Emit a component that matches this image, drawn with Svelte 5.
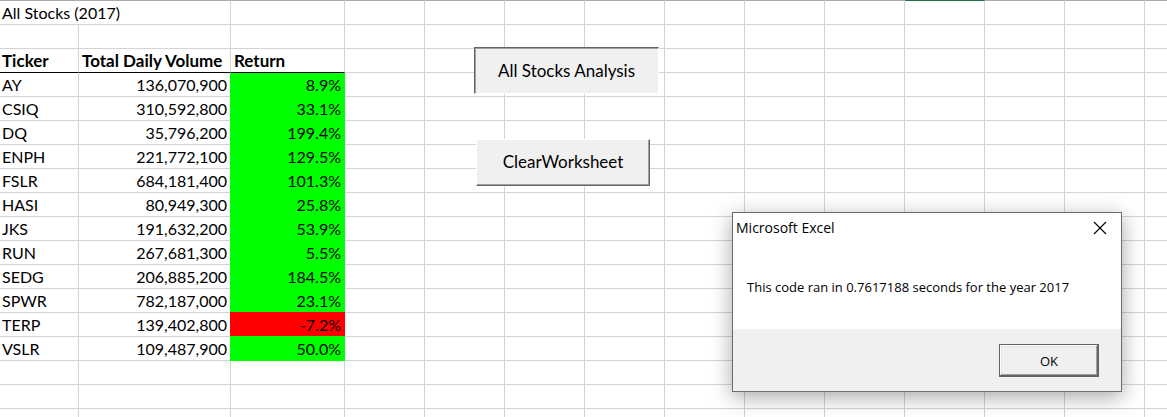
<script>
  const stocks = [
    { ticker: 'AY', volume: 136070900, change: 8.9 },
    { ticker: 'CSIQ', volume: 310592800, change: 33.1 },
    { ticker: 'DQ', volume: 35796200, change: 199.4 },
    { ticker: 'ENPH', volume: 221772100, change: 129.5 },
    { ticker: 'FSLR', volume: 684181400, change: 101.3 },
    { ticker: 'HASI', volume: 80949300, change: 25.8 },
    { ticker: 'JKS', volume: 191632200, change: 53.9 },
    { ticker: 'RUN', volume: 267681300, change: 5.5 },
    { ticker: 'SEDG', volume: 206885200, change: 184.5 },
    { ticker: 'SPWR', volume: 782187000, change: 23.1 },
    { ticker: 'TERP', volume: 139402800, change: -7.2 },
    { ticker: 'VSLR', volume: 109487900, change: 50.0 }
  ];
  // Empty columns to the right of the data; the last one takes the spare width.
  const blanks = Array.from({ length: 11 }, (_, i) => i);
  const selectedColumn = 7;
  const trailingRows = [0, 1, 2];

  let open = $state(true);
</script>

{#snippet blankCells()}
  {#each blanks as b (b)}<td></td>{/each}
{/snippet}

<main class="sheet">
  <table>
    <colgroup>
      <col class="col-ticker" />
      <col class="col-volume" />
      <col class="col-return" />
      {#each blanks as b (b)}
        <col class={b === blanks.length - 1 ? '' : 'col-blank'} />
      {/each}
    </colgroup>
    <thead>
      <tr class="first">
        <td colspan="2">All Stocks (2017)</td>
        <td></td>
        {#each blanks as b (b)}<td class:selected={b === selectedColumn}></td>{/each}
      </tr>
      <tr><td></td><td></td><td></td>{@render blankCells()}</tr>
      <tr>
        <th scope="col">Ticker</th>
        <th scope="col">Total Daily Volume</th>
        <th scope="col">Return</th>
        {@render blankCells()}
      </tr>
    </thead>
    <tbody>
      {#each stocks as stock, i (stock.ticker)}
        <tr>
          <td>{stock.ticker}</td>
          <td class="number">{stock.volume.toLocaleString('en-US')}</td>
          <td class="number fill" class:loss={stock.change < 0} class:top={i === 0}>{stock.change.toFixed(1)}%</td>
          {@render blankCells()}
        </tr>
      {/each}
      {#each trailingRows as r (r)}
        <tr><td></td><td></td><td></td>{@render blankCells()}</tr>
      {/each}
    </tbody>
  </table>

  <button type="button" class="macro pressed" onclick={() => (open = true)}>All Stocks Analysis</button>
  <button type="button" class="macro raised">ClearWorksheet</button>

  {#if open}
    <div class="dialog" role="dialog" aria-labelledby="dialog-title" aria-describedby="dialog-text">
      <header>
        <span id="dialog-title">Microsoft Excel</span>
        <button type="button" class="close" aria-label="Close" onclick={() => (open = false)}>
          <svg width="14" height="14" viewBox="0 0 14 14" aria-hidden="true">
            <path d="M1 1L13 13M13 1L1 13" fill="none" stroke="#000" stroke-width="1.1" />
          </svg>
        </button>
      </header>
      <p id="dialog-text">This code ran in 0.7617188 seconds for the year 2017</p>
      <footer>
        <button type="button" class="ok" onclick={() => (open = false)}>OK</button>
      </footer>
    </div>
  {/if}
</main>

<style>
  :global(body) {
    margin: 0;
    background: #fff;
  }

  .sheet {
    position: relative;
    height: 100vh;
    overflow: hidden;
    color: #000;
    font: 16px/23px Lato, Calibri, sans-serif;
  }

  table {
    width: 100%;
    table-layout: fixed;
    border-collapse: separate;
    border-spacing: 0;
  }

  .col-ticker { width: 79px; }
  .col-volume { width: 152px; }
  .col-return { width: 114px; }
  .col-blank { width: 80px; }

  td,
  th {
    box-sizing: border-box;
    height: 24px;
    padding: 0 3px 0 2px;
    border-right: 1px solid #d4d4d4;
    border-bottom: 1px solid #d4d4d4;
    text-align: left;
    white-space: nowrap;
  }

  td:last-child { border-right: 0; }

  th {
    padding-left: 3px;
    border-bottom-color: #000;
    font-size: 17px;
    font-weight: 700;
  }

  th:first-child { padding-left: 2px; }

  .first td {
    height: 25px;
    border-top: 1px solid #ababab;
  }

  .first .selected { border-top-color: #217346; }

  .number { text-align: right; }

  .fill {
    --fill: #0f0;
    border-color: #0f0;
    background: var(--fill);
    box-shadow: -1px 0 var(--fill), -1px -1px var(--fill), 0 -1px var(--fill);
  }

  .fill.top { box-shadow: -1px 0 var(--fill); }

  .fill.loss {
    --fill: #f00;
    border-right-color: #f00;
  }

  button {
    margin: 0;
    padding: 0;
    color: #000;
    font: inherit;
  }

  .macro {
    position: absolute;
    box-sizing: border-box;
    height: 47px;
    border: 1px solid #fff;
    background: #f0f0f0;
    font-size: 17px;
  }

  .pressed {
    top: 47px;
    left: 474px;
    width: 185px;
    border-top-color: #646464;
    border-left-color: #646464;
    box-shadow: inset 1px 1px #a0a0a0;
  }

  .raised {
    top: 139px;
    left: 476px;
    width: 174px;
    padding-bottom: 2px;
    border-right-color: #646464;
    border-bottom-color: #646464;
    box-shadow: inset -1px -1px #a0a0a0;
  }

  .dialog {
    position: absolute;
    top: 212px;
    left: 732px;
    box-sizing: border-box;
    width: 390px;
    border: 1px solid #6b6b6b;
    background: #fff;
    box-shadow: 0 5px 20px rgba(0, 0, 0, 0.35);
    font: 13px/20px "Open Sans", "Segoe UI", sans-serif;
  }

  header {
    display: flex;
    align-items: center;
    justify-content: space-between;
    height: 30px;
    padding: 0 14px 0 3px;
    font-size: 14px;
  }

  .close {
    display: flex;
    border: 0;
    background: none;
  }

  p {
    margin: 0;
    padding: 34px 14px 32px;
  }

  footer {
    display: flex;
    justify-content: flex-end;
    padding: 15px 22px 14px;
    background: #f0f0f0;
  }

  .ok {
    box-sizing: border-box;
    width: 100px;
    height: 33px;
    border: 1px solid #646464;
    background: #f0f0f0;
    box-shadow: inset -1px -1px #646464, inset 1px 1px #fff, inset -2px -2px #a0a0a0, inset 2px 2px #e3e3e3;
  }
</style>
